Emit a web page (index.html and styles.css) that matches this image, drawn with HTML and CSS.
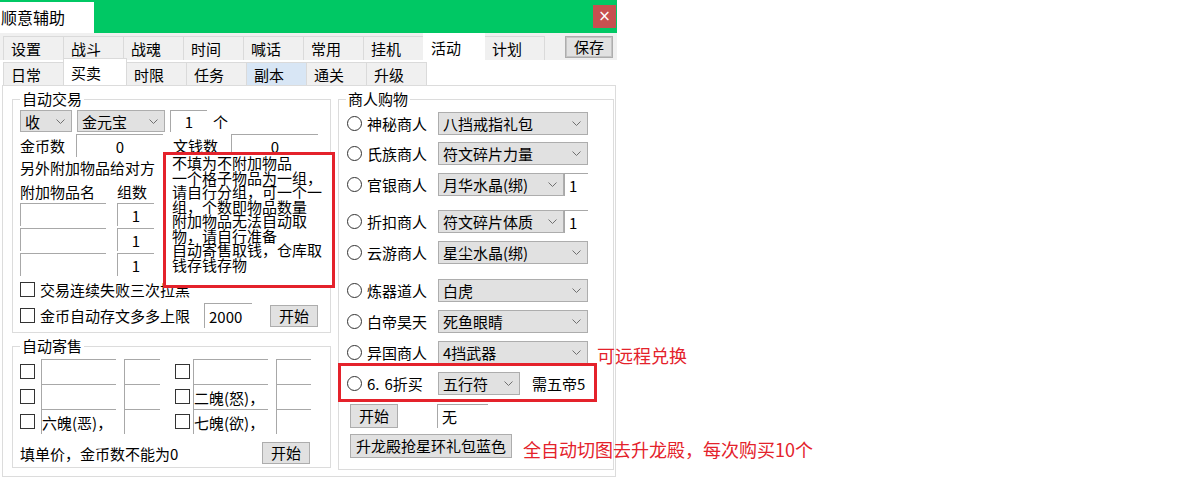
FILE: index.html
```html
<!DOCTYPE html>
<html lang="zh-CN">
<head>
    <meta charset="UTF-8">
    <title>顺意辅助</title>
    <link rel="stylesheet" href="styles.css">
</head>
<body>
    <div class="window">
        <div class="titlebar">
            <div class="title">顺意辅助</div>
            <div class="close">×</div>
        </div>

        <div class="tabs tabs-main">
            <span class="tab">设置</span>
            <span class="tab">战斗</span>
            <span class="tab">战魂</span>
            <span class="tab">时间</span>
            <span class="tab">喊话</span>
            <span class="tab">常用</span>
            <span class="tab">挂机</span>
            <span class="tab active">活动</span>
            <span class="tab">计划</span>
            <button class="btn save">保存</button>
        </div>

        <div class="tabs tabs-sub">
            <span class="tab">日常</span>
            <span class="tab active">买卖</span>
            <span class="tab">时限</span>
            <span class="tab">任务</span>
            <span class="tab hover">副本</span>
            <span class="tab">通关</span>
            <span class="tab">升级</span>
        </div>

        <div class="page">
            <div class="col-left">
                <fieldset class="group trade">
                    <legend>自动交易</legend>
                    <div class="group-body">
                        <div class="row row-a">
                            <div class="combo w52"><span>收</span><svg class="chev" viewBox="0 0 9 5"><polyline points="0.5,0.5 4.5,4.5 8.5,0.5"/></svg></div>
                            <div class="combo w88 ml5"><span>金元宝</span><svg class="chev" viewBox="0 0 9 5"><polyline points="0.5,0.5 4.5,4.5 8.5,0.5"/></svg></div>
                            <div class="field center w37 ml5">1</div>
                            <span class="ml6">个</span>
                        </div>
                        <div class="row row-b">
                            <span class="lbl w56">金币数</span>
                            <div class="field center w87">0</div>
                            <span class="lbl w58 ml10">文钱数</span>
                            <div class="field center w87">0</div>
                        </div>
                        <div class="row row-c">另外附加物品给对方</div>
                        <div class="row row-d">
                            <span class="lbl w97">附加物品名</span>
                            <span>组数</span>
                        </div>
                        <div class="row row-e">
                            <div class="field w86"></div>
                            <div class="field center w37 ml11">1</div>
                        </div>
                        <div class="row row-e">
                            <div class="field w86"></div>
                            <div class="field center w37 ml11">1</div>
                        </div>
                        <div class="row row-e">
                            <div class="field w86"></div>
                            <div class="field center w37 ml11">1</div>
                        </div>
                        <div class="row row-f">
                            <span class="check"></span>
                            <span class="ml5">交易连续失败三次拉黑</span>
                        </div>
                        <div class="row row-g">
                            <span class="check"></span>
                            <span class="ml5 w164">金币自动存文多多上限</span>
                            <div class="field w48 pad">2000</div>
                            <button class="btn w48 ml18">开始</button>
                        </div>
                    </div>
                </fieldset>

                <fieldset class="group consign">
                    <legend>自动寄售</legend>
                    <div class="group-body">
                        <div class="row row-s">
                            <span class="check"></span>
                            <div class="field w75 ml6"></div>
                            <div class="field w36 ml8"></div>
                            <span class="check ml15"></span>
                            <div class="field w75 ml3"></div>
                            <div class="field w35 ml8"></div>
                        </div>
                        <div class="row row-s">
                            <span class="check"></span>
                            <div class="field w75 ml6"></div>
                            <div class="field w36 ml8"></div>
                            <span class="check ml15"></span>
                            <div class="field w75 ml3">二魄(怒)，</div>
                            <div class="field w35 ml8"></div>
                        </div>
                        <div class="row row-s">
                            <span class="check"></span>
                            <div class="field w75 ml6">六魄(恶)，</div>
                            <div class="field w36 ml8"></div>
                            <span class="check ml15"></span>
                            <div class="field w75 ml3">七魄(欲)，</div>
                            <div class="field w35 ml8"></div>
                        </div>
                        <div class="row row-h">
                            <span class="w242">填单价，金币数不能为0</span>
                            <button class="btn w48">开始</button>
                        </div>
                    </div>
                </fieldset>
            </div>

            <fieldset class="group shop">
                <legend>商人购物</legend>
                <div class="group-body">
                    <div class="srow mt5">
                        <span class="radio"></span><span class="slabel">神秘商人</span>
                        <div class="combo w150"><span>八挡戒指礼包</span><svg class="chev" viewBox="0 0 9 5"><polyline points="0.5,0.5 4.5,4.5 8.5,0.5"/></svg></div>
                    </div>
                    <div class="srow mt7">
                        <span class="radio"></span><span class="slabel">氏族商人</span>
                        <div class="combo w150"><span>符文碎片力量</span><svg class="chev" viewBox="0 0 9 5"><polyline points="0.5,0.5 4.5,4.5 8.5,0.5"/></svg></div>
                    </div>
                    <div class="srow mt8">
                        <span class="radio"></span><span class="slabel">官银商人</span>
                        <div class="combo w126"><span>月华水晶(绑)</span><svg class="chev" viewBox="0 0 9 5"><polyline points="0.5,0.5 4.5,4.5 8.5,0.5"/></svg></div>
                        <div class="field w24 pad">1</div>
                    </div>
                    <div class="srow mt14">
                        <span class="radio"></span><span class="slabel">折扣商人</span>
                        <div class="combo w126"><span>符文碎片体质</span><svg class="chev" viewBox="0 0 9 5"><polyline points="0.5,0.5 4.5,4.5 8.5,0.5"/></svg></div>
                        <div class="field w24 pad">1</div>
                    </div>
                    <div class="srow mt8">
                        <span class="radio"></span><span class="slabel">云游商人</span>
                        <div class="combo w150"><span>星尘水晶(绑)</span><svg class="chev" viewBox="0 0 9 5"><polyline points="0.5,0.5 4.5,4.5 8.5,0.5"/></svg></div>
                    </div>
                    <div class="srow mt15">
                        <span class="radio"></span><span class="slabel">炼器道人</span>
                        <div class="combo w150"><span>白虎</span><svg class="chev" viewBox="0 0 9 5"><polyline points="0.5,0.5 4.5,4.5 8.5,0.5"/></svg></div>
                    </div>
                    <div class="srow mt8">
                        <span class="radio"></span><span class="slabel">白帝昊天</span>
                        <div class="combo w150"><span>死鱼眼睛</span><svg class="chev" viewBox="0 0 9 5"><polyline points="0.5,0.5 4.5,4.5 8.5,0.5"/></svg></div>
                    </div>
                    <div class="srow mt8">
                        <span class="radio"></span><span class="slabel">异国商人</span>
                        <div class="combo w150"><span>4挡武器</span><svg class="chev" viewBox="0 0 9 5"><polyline points="0.5,0.5 4.5,4.5 8.5,0.5"/></svg></div>
                    </div>
                    <div class="srow mt8">
                        <span class="radio"></span><span class="slabel">6<span class="spaced">.</span>6折买</span>
                        <div class="combo w82"><span>五行符</span><svg class="chev" viewBox="0 0 9 5"><polyline points="0.5,0.5 4.5,4.5 8.5,0.5"/></svg></div>
                        <span class="ml12">需五帝5</span>
                    </div>
                    <div class="srow tall mt9">
                        <button class="btn w48 ml3">开始</button>
                        <div class="field w51 ml39 pad">无</div>
                    </div>
                    <div class="srow tall mt6">
                        <button class="btn w162 ml3">升龙殿抢星环礼包蓝色</button>
                    </div>
                </div>
            </fieldset>
        </div>

        <div class="mark mark-tip">不填为不附加物品
一个格子物品为一组，请自行分组，可一个一组，个数即物品数量
附加物品无法自动取物，请自行准备
自动寄售取钱，仓库取钱存钱存物</div>
        <div class="mark mark-row"></div>
        <div class="note note-remote">可远程兑换</div>
        <div class="note note-auto">全自动切图去升龙殿，每次购买10个</div>
    </div>
</body>
</html>
```

FILE: styles.css
```css
* {
    box-sizing: border-box;
}

body {
    margin: 0;
    background: #fff;
    color: #000;
    font-family: "Noto Sans CJK SC", "Noto Sans", sans-serif;
    font-size: 15px;
    line-height: 17px;
}

.window {
    position: relative;
    width: 617px;
}

/* title bar */
.titlebar {
    height: 33px;
    background: #00c864;
    display: flex;
    justify-content: space-between;
    align-items: flex-start;
}

.title {
    margin-top: 2px;
    width: 94px;
    height: 31px;
    background: #fff;
    font-size: 16px;
    line-height: 31px;
    padding-left: 1px;
}

.close {
    margin: 5px 1px 0 0;
    width: 23px;
    height: 23px;
    background: #c75050;
    color: #fff;
    font-family: "DejaVu Sans", sans-serif;
    font-size: 15px;
    line-height: 22px;
    text-align: center;
}

/* tab strips */
.tabs {
    display: flex;
    align-items: flex-start;
    padding-left: 3px;
}

.tabs-main {
    height: 27px;
    background: #f0f0f0;
}

.tabs-sub {
    height: 25px;
    background: #fff;
}

.tab {
    position: relative;
    display: flex;
    align-items: center;
    width: 61px;
    margin-right: -1px;
    padding-left: 7px;
    background: #f0f0f0;
    border: 1px solid #dadada;
    border-bottom: none;
}

.tabs-main .tab {
    margin-top: 3px;
    height: 24px;
}

.tabs-main .tab.active {
    margin-top: 0;
    height: 27px;
    width: 62px;
    background: #fff;
    border-color: #fff;
    z-index: 1;
}

.tabs-sub .tab {
    margin-top: 2px;
    height: 23px;
}

.tabs-sub .tab.active {
    margin-top: -2px;
    height: 27px;
    width: 64px;
    background: #fff;
    border-color: #dadada;
    z-index: 1;
}

.tab.hover {
    background: #d8e6f5;
}

.btn {
    height: 22px;
    padding: 0;
    background: #e1e1e1;
    border: 1px solid #adadad;
    font-family: inherit;
    font-size: 15px;
    line-height: 18px;
    color: #000;
}

.save {
    margin: 3px 4px 0 auto;
    width: 48px;
    height: 22px;
    box-shadow: inset 0 0 0 1px #c4c4c4;
}

/* tab page */
.page {
    margin-left: 2px;
    width: 614px;
    height: 392px;
    border: 1px solid #dcdcdc;
    display: flex;
    gap: 7px;
    padding: 5px 1px 0 9px;
}

.col-left {
    width: 319px;
    display: flex;
    flex-direction: column;
    gap: 5px;
}

.group {
    margin: 0;
    padding: 0;
    min-width: 0;
    border: 1px solid #dcdcdc;
}

.group legend {
    margin-left: 7px;
    padding: 0 2px;
    line-height: 16px;
}

.trade .group-body {
    padding: 3px 0 4px 7px;
}

.consign .group-body {
    padding: 5px 0 3px 7px;
}

.shop {
    width: 276px;
    align-self: flex-start;
}

.shop .group-body {
    padding: 0 0 11px 8px;
}

.row {
    display: flex;
    align-items: center;
}

.row-a { margin-top: 0; height: 22px; }
.row-b { margin-top: 2px; height: 23px; }
.row-c { margin-top: 1px; height: 18px; }
.row-d { margin-top: 6px; height: 18px; }
.row-e { margin-top: 2px; height: 23px; }
.row-d + .row-e { margin-top: 3px; }
.row-f { margin-top: 4px; height: 19px; }
.row-g { margin-top: 4px; height: 25px; }
.row-s { height: 25px; }
.row-h { margin-top: 8px; height: 22px; }

.srow {
    display: flex;
    align-items: center;
    height: 23px;
}

.srow.tall { height: 24px; }
.srow .btn { height: 24px; }

/* controls */
.combo {
    height: 100%;
    display: flex;
    align-items: center;
    justify-content: space-between;
    padding: 0 6px 0 4px;
    background: #e1e1e1;
    border: 1px solid #adadad;
    white-space: nowrap;
}

.chev {
    width: 9px;
    height: 5px;
    flex-shrink: 0;
}

.chev polyline {
    fill: none;
    stroke: #707070;
    stroke-width: 1;
}

.field {
    height: 100%;
    display: flex;
    align-items: center;
    background: #fff;
    border-top: 1px solid #a8a8a8;
    border-left: 1px solid #a8a8a8;
    white-space: nowrap;
    overflow: hidden;
}

.field.center { justify-content: center; }
.field.pad { padding-left: 4px; }

.check {
    width: 15px;
    height: 15px;
    flex-shrink: 0;
    border: 1px solid #333;
    background: #fff;
}

.radio {
    width: 15px;
    height: 15px;
    flex-shrink: 0;
    border: 1px solid #333;
    border-radius: 50%;
}

.slabel {
    margin-left: 5px;
    width: 71px;
    white-space: nowrap;
}

.spaced { letter-spacing: 5px; }

/* widths and gaps */
.w24 { width: 24px; }
.w35 { width: 35px; }
.w36 { width: 36px; }
.w37 { width: 37px; }
.w48 { width: 48px; }
.w51 { width: 51px; }
.w52 { width: 52px; }
.w56 { width: 56px; }
.w58 { width: 58px; }
.w75 { width: 75px; }
.w82 { width: 82px; }
.w86 { width: 86px; }
.w87 { width: 87px; }
.w88 { width: 88px; }
.w97 { width: 97px; }
.w126 { width: 126px; }
.w150 { width: 150px; }
.w162 { width: 162px; }
.w164 { width: 164px; }
.w242 { width: 242px; }

.ml3 { margin-left: 3px; }
.ml4 { margin-left: 4px; }
.ml5 { margin-left: 5px; }
.ml6 { margin-left: 6px; }
.ml8 { margin-left: 8px; }
.ml10 { margin-left: 10px; }
.ml11 { margin-left: 11px; }
.ml12 { margin-left: 12px; }
.ml15 { margin-left: 15px; }
.ml18 { margin-left: 18px; }
.ml39 { margin-left: 39px; }

.mt5 { margin-top: 5px; }
.mt6 { margin-top: 6px; }
.mt7 { margin-top: 7px; }
.mt8 { margin-top: 8px; }
.mt9 { margin-top: 9px; }
.mt14 { margin-top: 14px; }
.mt15 { margin-top: 15px; }

/* red annotations drawn over the form */
.mark {
    position: absolute;
    border: 3px solid #e4222b;
}

.mark-tip {
    left: 163px;
    top: 152px;
    width: 172px;
    height: 136px;
    padding: 1px 0 0 6px;
    background: #fff;
    white-space: pre-line;
    line-height: 14.5px;
    line-break: strict;
}

.mark-row {
    left: 338px;
    top: 363px;
    width: 259px;
    height: 39px;
}

.note {
    position: absolute;
    color: #e4222b;
    font-size: 18px;
    line-height: 20px;
    white-space: nowrap;
}

.note-remote {
    left: 597px;
    top: 345px;
}

.note-auto {
    left: 523px;
    top: 439px;
}
```
